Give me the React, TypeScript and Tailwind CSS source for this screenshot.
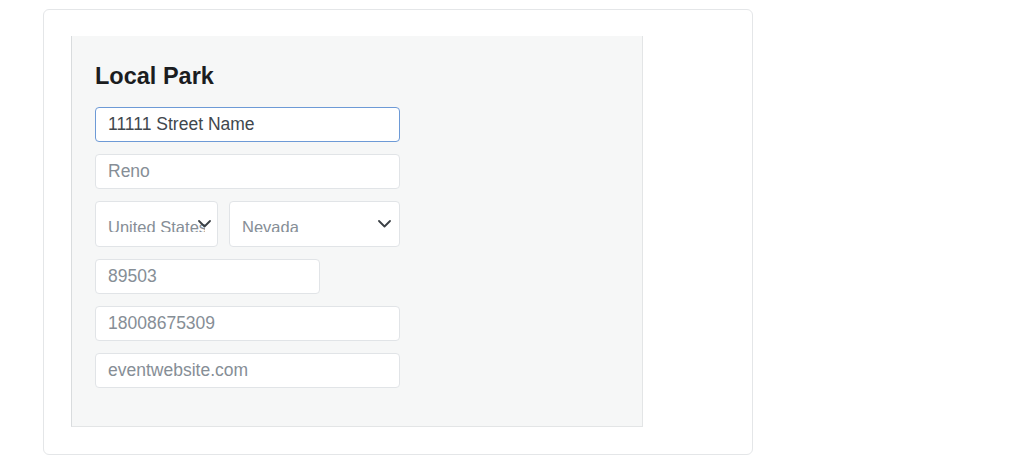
const font = { fontFamily: '"Liberation Sans", Arial, Helvetica, sans-serif' };

function Field({ value, placeholder, width = "w-[305px]", focused = false }: { value?: string; placeholder?: string; width?: string; focused?: boolean }) {
  return (
    <div
      className={`${width} h-[35px] flex items-center px-[12px] bg-white rounded-[4px] border text-[17.5px] ${
        focused ? "border-[#6d9ad6] text-[#41474d]" : "border-[#e1e4e7] text-[#868e96]"
      }`}
    >
      {value ?? placeholder}
    </div>
  );
}

function Chevron({ className }: { className: string }) {
  return (
    <svg className={className} width="13" height="8" viewBox="0 0 13 8" fill="none">
      <polyline points="1,1 6.5,6.5 12,1" stroke="#3a3f44" strokeWidth="1.8" strokeLinecap="round" strokeLinejoin="round" />
    </svg>
  );
}

function SelectBox({ label, width, chevronRight }: { label: string; width: string; chevronRight: string }) {
  return (
    <div className={`${width} relative h-[46px] bg-white rounded-[4px] border border-[#e1e4e7] px-[12px] overflow-hidden`}>
      <div className="mt-[15px] h-[15px] overflow-hidden whitespace-nowrap text-[16.5px] leading-[20px] text-[#868e96]">
        {label}
      </div>
      <Chevron className={`absolute top-[18px] ${chevronRight}`} />
    </div>
  );
}

export default function App() {
  return (
    <div className="min-h-[462px] bg-white pt-[9px] pl-[43px]" style={font}>
      {/* Outer card */}
      <div className="w-[710px] h-[446px] rounded-[6px] border border-[#e4e6e8] pt-[26px] pl-[27px]">
        {/* Venue panel */}
        <div className="w-[572px] h-[391px] bg-[#f6f7f7] border border-t-0 border-[#e3e5e6] border-l-[#d9dcde] pl-[23px] pt-[26px]">
          <h2 className="text-[23.5px] leading-[28px] font-bold text-[#1b1d1f]">Local Park</h2>
          <div className="mt-[17px] flex flex-col gap-[12px]">
            <Field value="11111 Street Name" focused />
            <Field placeholder="Reno" />
            <div className="flex gap-[11px]">
              <SelectBox label="United States" width="w-[123px]" chevronRight="right-[6px]" />
              <SelectBox label="Nevada" width="w-[171px]" chevronRight="right-[8px]" />
            </div>
            <Field placeholder="89503" width="w-[225px]" />
            <Field placeholder="18008675309" />
            <Field placeholder="eventwebsite.com" />
          </div>
        </div>
      </div>
    </div>
  );
}
